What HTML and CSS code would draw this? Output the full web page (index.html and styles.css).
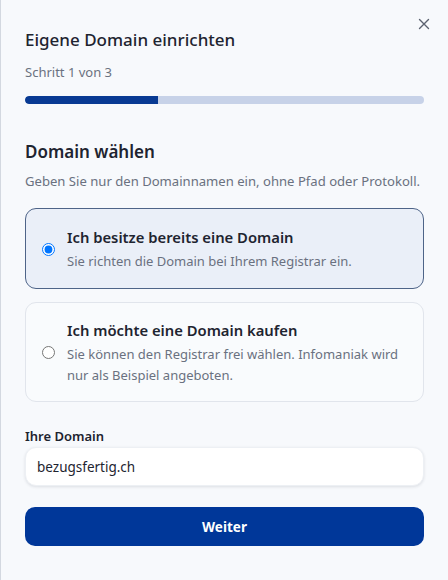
FILE: index.html
```html
<!DOCTYPE html>
<html lang="de">
<head>
<meta charset="utf-8">
<link rel="stylesheet" href="styles.css">
</head>
<body>
<div class="panel">
  <button class="close" aria-label="Schliessen">
    <svg width="12" height="12" viewBox="0 0 12 12"><path d="M1.5 1.5L10.5 10.5M10.5 1.5L1.5 10.5" stroke="#5b6270" stroke-width="1.4" stroke-linecap="round"/></svg>
  </button>
  <h1 class="title">Eigene Domain einrichten</h1>
  <p class="step">Schritt 1 von 3</p>
  <div class="progress"><div class="progress-fill"></div></div>

  <h2 class="section">Domain wählen</h2>
  <p class="desc">Geben Sie nur den Domainnamen ein, ohne Pfad oder Protokoll.</p>

  <div class="options">
    <label class="option selected">
      <input type="radio" name="mode" checked>
      <span class="option-text">
        <span class="option-title">Ich besitze bereits eine Domain</span>
        <span class="option-sub">Sie richten die Domain bei Ihrem Registrar ein.</span>
      </span>
    </label>
    <label class="option">
      <input type="radio" name="mode">
      <span class="option-text">
        <span class="option-title">Ich möchte eine Domain kaufen</span>
        <span class="option-sub">Sie können den Registrar frei wählen. Infomaniak wird nur als Beispiel angeboten.</span>
      </span>
    </label>
  </div>

  <label class="field-label" for="domain">Ihre Domain</label>
  <input class="field" id="domain" type="text" value="bezugsfertig.ch">

  <button class="primary">Weiter</button>
</div>
</body>
</html>
```

FILE: styles.css
```css
html, body {
  margin: 0;
  padding: 0;
  height: 100%;
}
body {
  background: #f7f9fc;
  font-family: "Noto Sans", "Open Sans", sans-serif;
  color: #1e2430;
}
.panel {
  position: relative;
  box-sizing: border-box;
  min-height: 100%;
  border-left: 1px solid #d3d8e0;
  padding: 28px 24px 0 24px;
  display: flex;
  flex-direction: column;
}
.close {
  position: absolute;
  top: 18px;
  right: 18px;
  width: 12px;
  height: 12px;
  padding: 0;
  border: 0;
  background: none;
  display: flex;
}
.title {
  margin: 0;
  font-size: 17px;
  line-height: 24px;
  font-weight: 500;
}
.step {
  margin: 11px 0 0;
  font-size: 13px;
  line-height: 18px;
  color: #6a7180;
}
.progress {
  margin-top: 15px;
  height: 8px;
  border-radius: 4px;
  background: #c7d2e8;
  overflow: hidden;
}
.progress-fill {
  width: 33.4%;
  height: 100%;
  background: #083a93;
  border-radius: 4px 0 0 4px;
}
.section {
  margin: 36px 0 0;
  font-size: 17px;
  line-height: 24px;
  font-weight: 600;
}
.desc {
  margin: 7px 0 0;
  font-size: 13.1px;
  line-height: 20px;
  color: #6a7180;
}
.options {
  margin-top: 17px;
  display: flex;
  flex-direction: column;
  gap: 13px;
}
.option {
  display: flex;
  align-items: center;
  gap: 12px;
  padding: 16px 18px 15px 16px;
  border: 1px solid #e1e5ec;
  border-radius: 11px;
  background: #f9fbfd;
}
.option.selected {
  border-color: #4e6488;
  background: #eaeff8;
  padding-top: 17px;
  padding-bottom: 16px;
}
.option input {
  margin: 0;
  width: 13px;
  height: 13px;
  flex: none;
}
.option-text {
  display: flex;
  flex-direction: column;
  gap: 3px;
}
.option-title {
  font-size: 14.8px;
  line-height: 22px;
  font-weight: 600;
}
.option-sub {
  font-size: 13px;
  line-height: 21px;
  color: #6a7180;
}
.field-label {
  margin-top: 25px;
  font-size: 13px;
  line-height: 18px;
  font-weight: 600;
}
.field {
  margin-top: 2px;
  box-sizing: border-box;
  height: 39px;
  padding: 0 11px;
  border: 1px solid #edf0f4;
  border-radius: 11px;
  background: #ffffff;
  box-shadow: 0 1px 3px rgba(30, 40, 60, 0.12);
  font-family: inherit;
  font-size: 13.5px;
  color: #1e2430;
  outline: none;
}
.primary {
  margin-top: 21px;
  height: 39px;
  border: 0;
  border-radius: 10px;
  background: #003799;
  color: #ffffff;
  font-family: inherit;
  font-size: 13.5px;
  font-weight: 700;
}
```
